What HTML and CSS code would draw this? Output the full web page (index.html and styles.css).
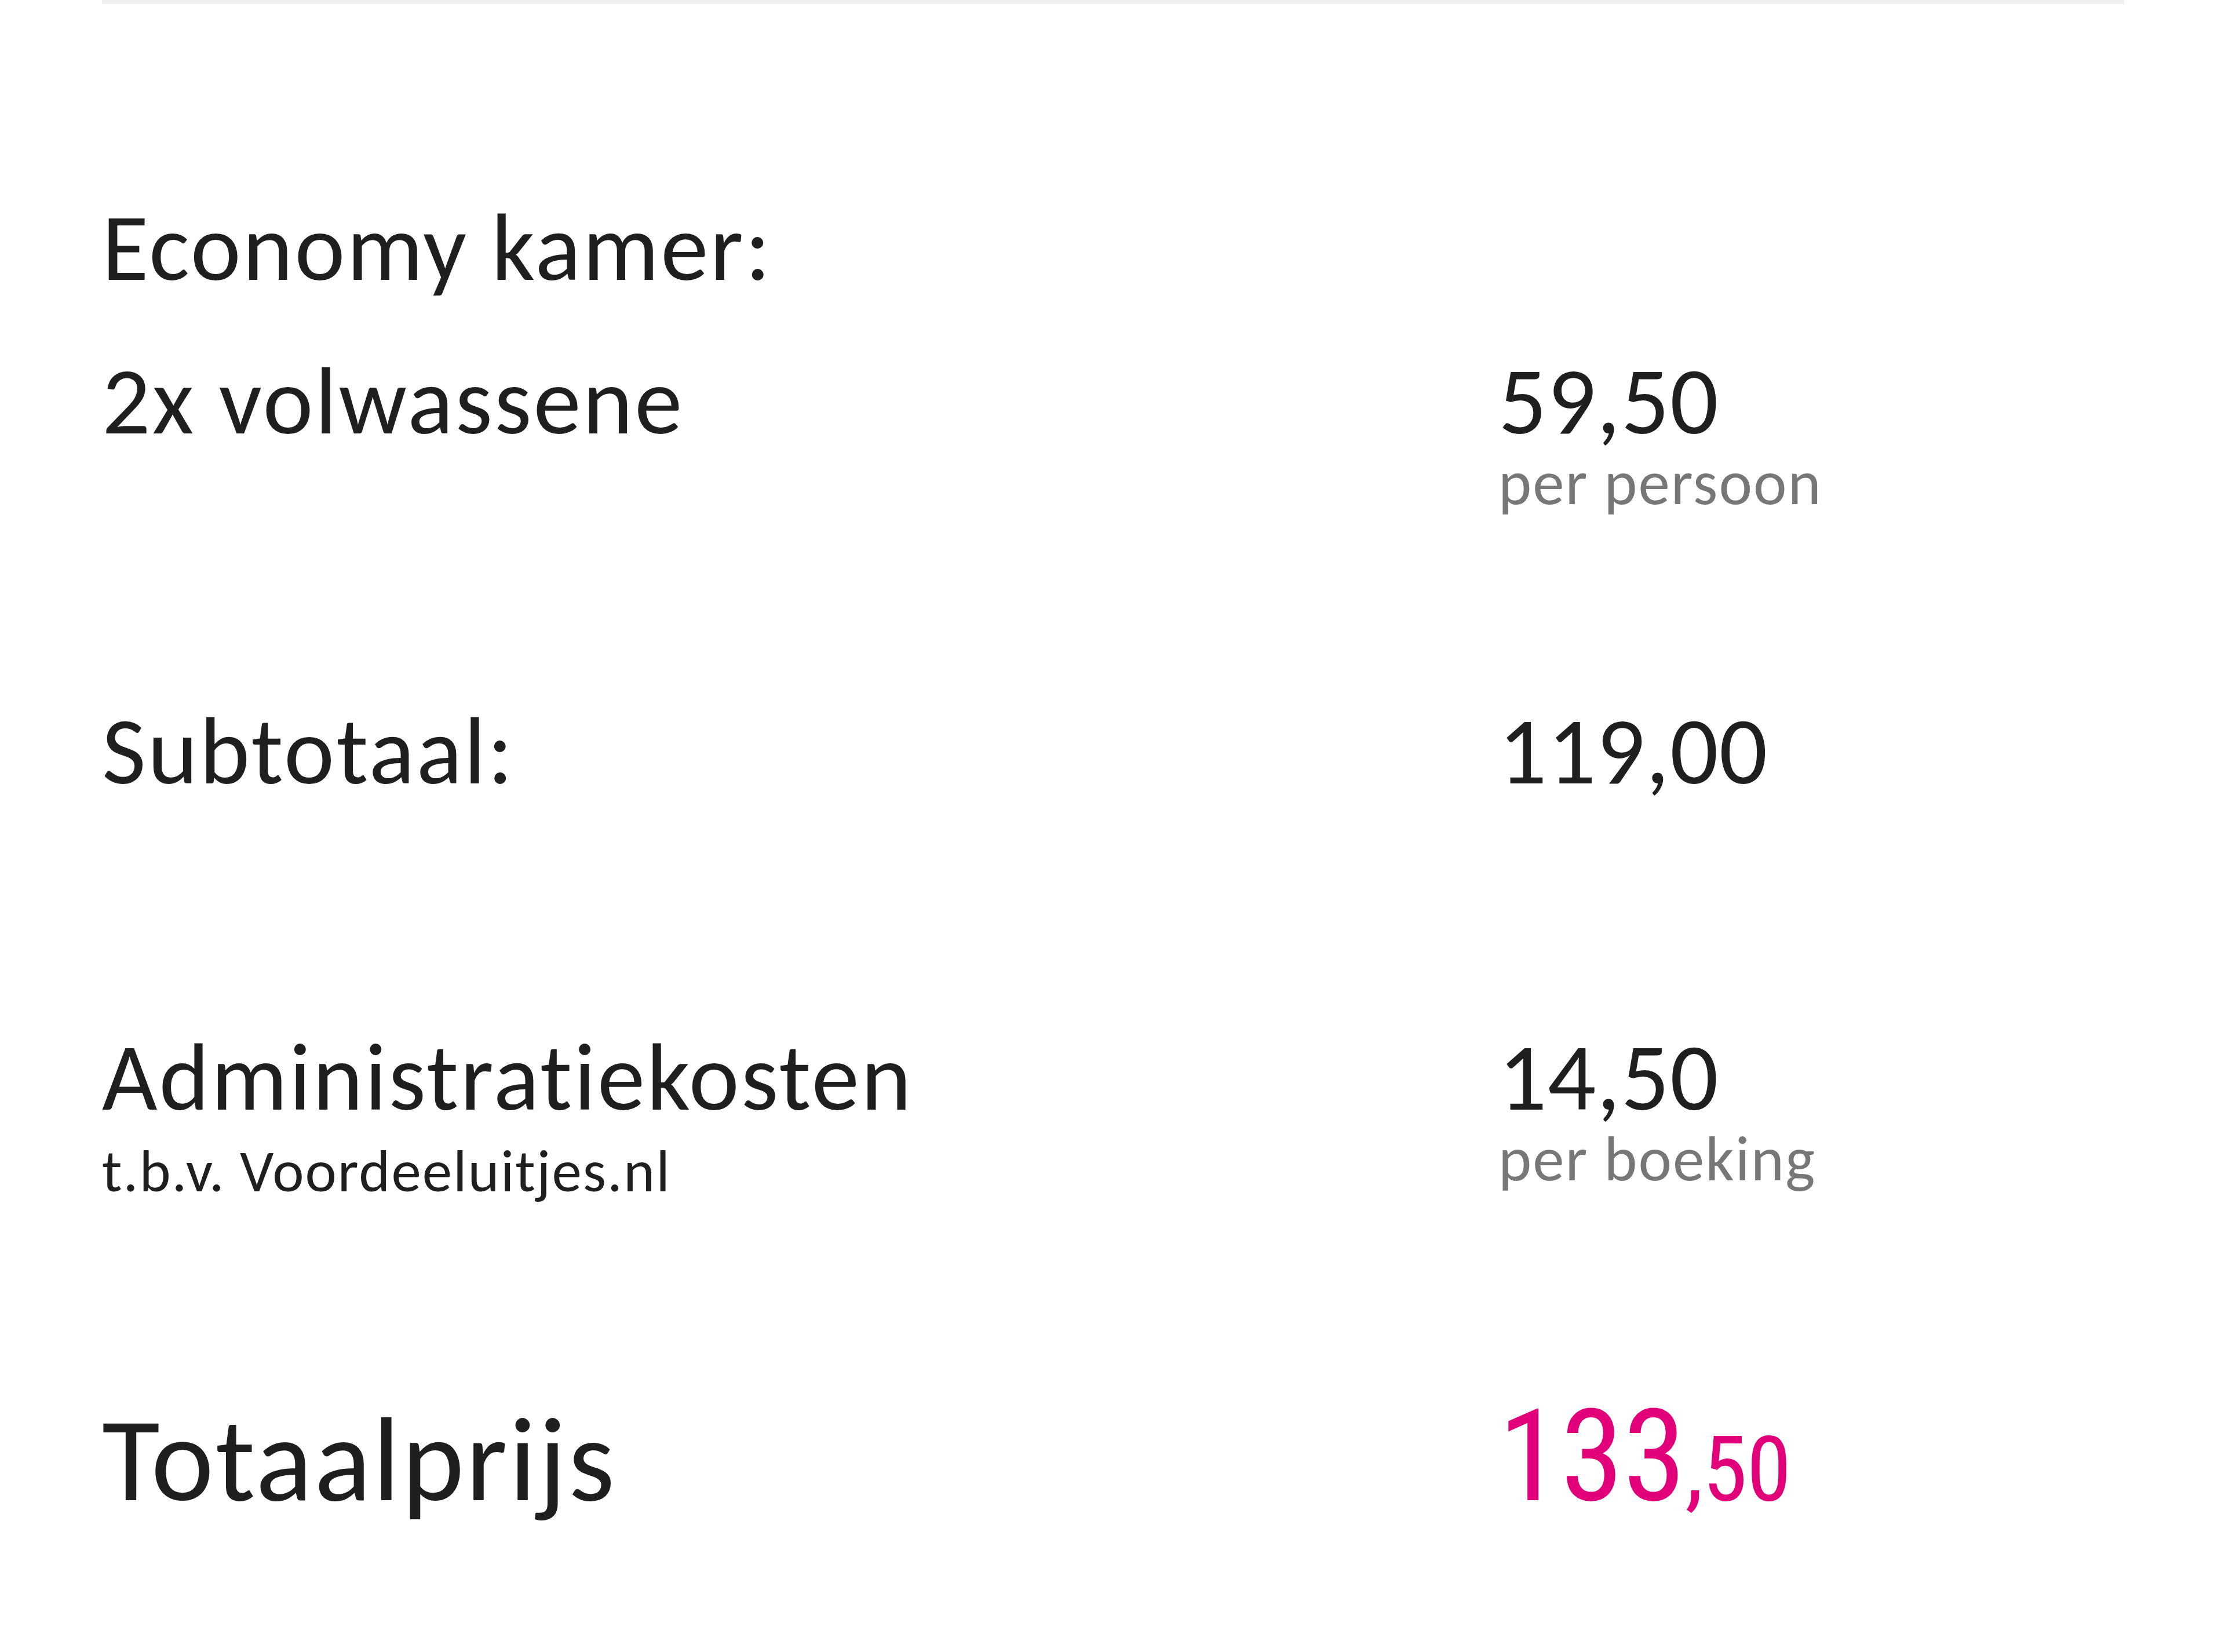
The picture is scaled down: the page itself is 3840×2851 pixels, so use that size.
FILE: index.html
```html
<!DOCTYPE html>
<html lang="nl">
<head>
<meta charset="utf-8">
<title>Prijsoverzicht</title>
<link rel="stylesheet" href="styles.css">
</head>
<body>
<div class="summary">
  <div class="topline"></div>

  <div class="heading">Economy kamer:</div>
  <div class="row row-first">
    <div class="label">2x volwassene</div>
    <div class="value">59,50<span class="unit">per persoon</span></div>
  </div>

  <div class="row row-subtotal">
    <div class="label">Subtotaal:</div>
    <div class="value">119,00</div>
  </div>

  <div class="row row-admin">
    <div class="label">Administratiekosten<span class="note">t.b.v. Voordeeluitjes.nl</span></div>
    <div class="value">14,50<span class="unit">per boeking</span></div>
  </div>

  <div class="row row-total">
    <div class="label total-label">Totaalprijs</div>
    <div class="value total-value">133<span class="cents">,50</span></div>
  </div>
</div>
</body>
</html>
```

FILE: styles.css
```css
html, body {
  margin: 0;
  padding: 0;
  background: #ffffff;
}

body {
  font-family: "Carlito", "Calibri", "Lato", sans-serif;
  color: #1f1f1f;
}

.summary {
  width: 3490px;
  margin-left: 176px;
  min-height: 2851px;
}

.topline {
  height: 7px;
  background: #f0f0f0;
}

.heading {
  font-size: 165px;
  line-height: 1;
  letter-spacing: 3px;
  margin-top: 337px;
}

.row {
  display: grid;
  grid-template-columns: 2410px 1fr;
  align-items: baseline;
}

.label,
.value {
  font-size: 165px;
  line-height: 1;
  letter-spacing: 3px;
}

.value {
  letter-spacing: 1px;
}

.unit {
  display: block;
  font-size: 109px;
  line-height: 1;
  letter-spacing: 2px;
  color: #777777;
  margin-top: 4px;
}

.note {
  display: block;
  font-size: 103px;
  line-height: 1;
  letter-spacing: 2px;
  margin-top: 29px;
}

.row-first {
  margin-top: 100px;
}

.row-subtotal {
  margin-top: 326px;
}

.row-admin {
  margin-top: 398px;
}

.row-total {
  margin-top: 331px;
}

.total-label {
  font-size: 205px;
  letter-spacing: 3px;
}

.total-value {
  font-family: "Liberation Sans Narrow", "Roboto Condensed", "Liberation Sans", sans-serif;
  font-size: 220px;
  color: #e2007a;
  letter-spacing: -1px;
}

.cents {
  font-size: 156px;
}
```
